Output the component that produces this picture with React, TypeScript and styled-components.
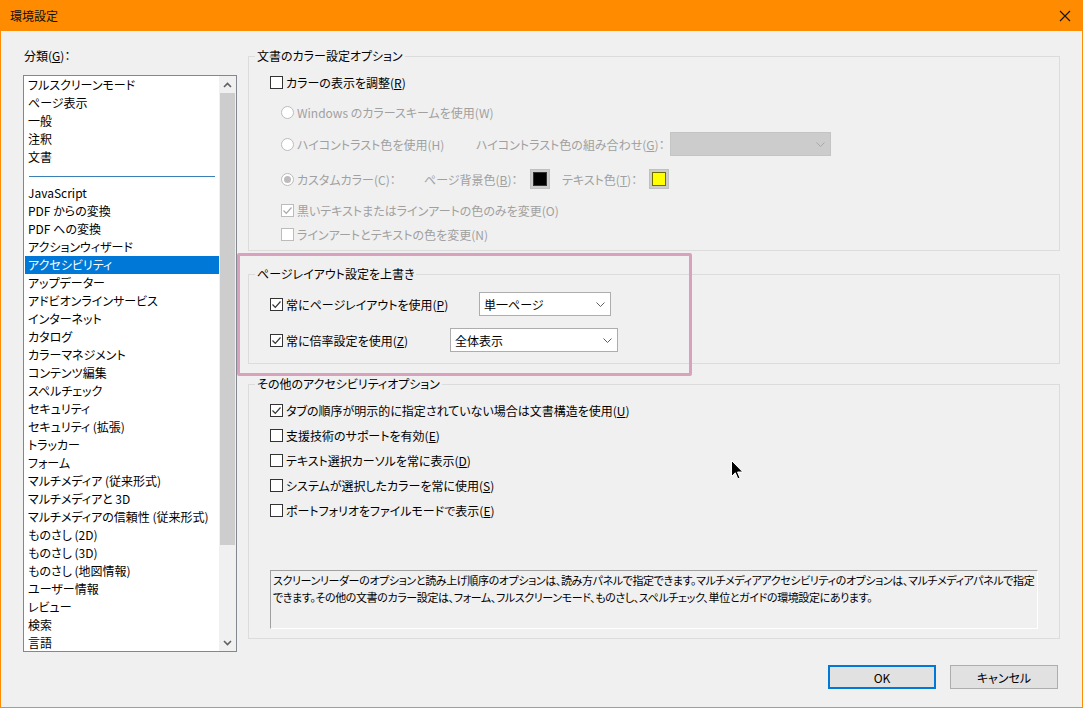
import React from "react";
import styled, { createGlobalStyle } from "styled-components";

const ORANGE = "#ff8c00";
const ACCENT = "#0078d7";
const DIM = "#a0a0a0";

const GlobalStyle = createGlobalStyle`
  html, body { margin: 0; padding: 0; background: #f0f0f0; }
  body {
    font-family: "Noto Sans CJK JP", "Noto Sans", sans-serif;
    font-size: 12px;
    color: #000;
    font-feature-settings: "palt";
  }
  * { box-sizing: border-box; }
`;

const Window = styled.div`
  position: relative;
  width: 1083px;
  height: 708px;
  background: #f0f0f0;
  border: 1px solid ${ORANGE};
  border-top: none;
  display: flex;
  flex-direction: column;
  overflow: hidden;
`;

const TitleBar = styled.div`
  height: 31px;
  flex: none;
  background: ${ORANGE};
  display: flex;
  align-items: center;
  justify-content: space-between;
  padding: 0 10px 0 9px;
  color: #111;
`;

const CloseButton = styled.div`
  width: 12px;
  height: 12px;
  margin-right: 1px;
  display: flex;
`;

const Content = styled.div`
  flex: 1;
  display: flex;
  padding: 17px 0 0 22px;
`;

const LeftColumn = styled.div`
  width: 214px;
  display: flex;
  flex-direction: column;
`;

const FieldLabel = styled.div`
  height: 16px;
  line-height: 16px;
  padding-left: 1px;
`;

const ListBox = styled.div`
  margin-top: 11px;
  height: 577px;
  border: 1px solid #828790;
  background: #fff;
  display: flex;
`;

const ItemList = styled.div`
  flex: 1;
  padding-left: 1px;
  overflow: hidden;
`;

const Item = styled.div<{ $selected?: boolean }>`
  height: 18px;
  line-height: 18px;
  padding-left: 3px;
  white-space: nowrap;
  background: ${(p) => (p.$selected ? ACCENT : "transparent")};
  color: ${(p) => (p.$selected ? "#fff" : "#000")};
`;

const Separator = styled.div`
  height: 18px;
  padding: 10px 4px 0 4px;
  &::after {
    content: "";
    display: block;
    height: 1px;
    background: #3a7fb6;
  }
`;

const ScrollBar = styled.div`
  width: 17px;
  background: #f0f0f0;
  display: flex;
  flex-direction: column;
`;

const ScrollArrow = styled.div`
  height: 17px;
  display: flex;
  align-items: center;
  justify-content: center;
`;

const ScrollTrack = styled.div`
  flex: 1;
`;

const ScrollThumb = styled.div`
  margin: 0 1px;
  height: 452px;
  background: #cdcdcd;
`;

const RightColumn = styled.div`
  width: 812px;
  margin-left: 11px;
  display: flex;
  flex-direction: column;
`;

const Group = styled.fieldset<{ $h: number; $mt?: number }>`
  margin: ${(p) => p.$mt ?? 0}px 0 0 0;
  padding: 0;
  height: ${(p) => p.$h}px;
  border: 1px solid #dcdcdc;
  min-inline-size: 0;
  display: flex;
  flex-direction: column;
`;

const Legend = styled.legend`
  margin-left: 6px;
  padding: 0 2px;
  line-height: 16px;
  height: 16px;
`;

const Row = styled.div<{ $mt: number; $h?: number; $indent?: number }>`
  display: flex;
  align-items: center;
  height: ${(p) => p.$h ?? 20}px;
  margin-top: ${(p) => p.$mt}px;
  padding-left: ${(p) => p.$indent ?? 21}px;
  white-space: nowrap;
`;

const Cell = styled.div<{ $w?: number; $dim?: boolean; $ml?: number }>`
  display: flex;
  align-items: center;
  width: ${(p) => (p.$w ? `${p.$w}px` : "auto")};
  margin-left: ${(p) => p.$ml ?? 0}px;
  flex: none;
  color: ${(p) => (p.$dim ? DIM : "#000")};
`;

const BoxMark = styled.span<{ $dim?: boolean }>`
  width: 13px;
  height: 13px;
  flex: none;
  border: 1px solid ${(p) => (p.$dim ? "#bcbcbc" : "#333")};
  background: #fff;
  margin-right: 3px;
  display: flex;
  align-items: center;
  justify-content: center;
`;

const RadioMark = styled.span`
  width: 13px;
  height: 13px;
  flex: none;
  border: 1px solid #bcbcbc;
  border-radius: 50%;
  background: #fff;
  margin-right: 3px;
  display: flex;
  align-items: center;
  justify-content: center;
`;

const RadioDot = styled.span`
  width: 7px;
  height: 7px;
  border-radius: 50%;
  background: #bcbcbc;
`;

const ComboBox = styled.div<{ $w: number; $dim?: boolean }>`
  width: ${(p) => p.$w}px;
  height: 24px;
  flex: none;
  border: 1px solid ${(p) => (p.$dim ? "#c4c4c4" : "#adadad")};
  background: ${(p) => (p.$dim ? "#cccccc" : "#fff")};
  display: flex;
  align-items: center;
  justify-content: space-between;
  padding: 0 5px 0 4px;
`;

const Swatch = styled.div<{ $color: string; $edge: string }>`
  width: 20px;
  height: 20px;
  flex: none;
  background: #cccccc;
  border: 1px solid #c0c0c0;
  display: flex;
  align-items: center;
  justify-content: center;
  &::after {
    content: "";
    width: 12px;
    height: 12px;
    background: ${(p) => p.$color};
    border: 1px solid ${(p) => p.$edge};
  }
`;

const InfoBox = styled.div`
  margin: 50px 0 0 21px;
  width: 768px;
  height: 59px;
  border-top: 1px solid #a0a0a0;
  border-left: 1px solid #a0a0a0;
  border-bottom: 1px solid #fff;
  border-right: 1px solid #fff;
  padding: 1px 0 0 2px;
  font-size: 11px;
  line-height: 17px;
  letter-spacing: -0.38px;
  white-space: nowrap;
`;

const ButtonRow = styled.div`
  display: flex;
  justify-content: flex-end;
  gap: 14px;
  margin-top: 26px;
  padding-right: 2px;
`;

const Button = styled.div<{ $default?: boolean }>`
  width: 108px;
  height: 24px;
  background: #e1e1e1;
  border: ${(p) => (p.$default ? `2px solid ${ACCENT}` : "1px solid #adadad")};
  display: flex;
  align-items: center;
  justify-content: center;
`;

const Highlight = styled.div`
  position: absolute;
  left: 236px;
  top: 253px;
  width: 455px;
  height: 123px;
  border: 3px solid #d9a2bc;
  border-radius: 2px;
  pointer-events: none;
`;

const Pointer = styled.svg`
  position: absolute;
  left: 730px;
  top: 460px;
`;

const Chevron = ({ up, color = "#606060" }: { up?: boolean; color?: string }) => (
  <svg width="9" height="6" viewBox="0 0 9 6">
    <path d={up ? "M1 5 L4.5 1.5 L8 5" : "M1 1 L4.5 4.5 L8 1"} fill="none" stroke={color} strokeWidth="1.6" />
  </svg>
);

const ThinChevron = ({ color }: { color: string }) => (
  <svg width="9" height="5" viewBox="0 0 9 5">
    <path d="M0.5 0.5 L4.5 4.5 L8.5 0.5" fill="none" stroke={color} strokeWidth="1" />
  </svg>
);

const Check = ({ color }: { color: string }) => (
  <svg width="11" height="11" viewBox="0 0 11 11">
    <path d="M1.5 5.5 L4.3 8.3 L9.5 2.5" fill="none" stroke={color} strokeWidth="1.2" />
  </svg>
);

const CheckItem = ({
  checked,
  dim,
  children,
}: {
  checked?: boolean;
  dim?: boolean;
  children: React.ReactNode;
}) => (
  <>
    <BoxMark $dim={dim}>{checked && <Check color={dim ? "#a8a8a8" : "#333"} />}</BoxMark>
    {children}
  </>
);

const RadioItem = ({ checked, children }: { checked?: boolean; children: React.ReactNode }) => (
  <>
    <RadioMark>{checked && <RadioDot />}</RadioMark>
    {children}
  </>
);

const categories: (string | null)[] = [
  "フルスクリーンモード",
  "ページ表示",
  "一般",
  "注釈",
  "文書",
  null,
  "JavaScript",
  "PDF からの変換",
  "PDF への変換",
  "アクションウィザード",
  "アクセシビリティ",
  "アップデーター",
  "アドビオンラインサービス",
  "インターネット",
  "カタログ",
  "カラーマネジメント",
  "コンテンツ編集",
  "スペルチェック",
  "セキュリティ",
  "セキュリティ (拡張)",
  "トラッカー",
  "フォーム",
  "マルチメディア (従来形式)",
  "マルチメディアと 3D",
  "マルチメディアの信頼性 (従来形式)",
  "ものさし (2D)",
  "ものさし (3D)",
  "ものさし (地図情報)",
  "ユーザー情報",
  "レビュー",
  "検索",
  "言語",
];

const App = () => {
  return (
    <Window>
      <GlobalStyle />
      <TitleBar>
        <span>環境設定</span>
        <CloseButton>
          <svg width="12" height="12" viewBox="0 0 12 12">
            <path d="M1 1 L11 11 M11 1 L1 11" stroke="#111" strokeWidth="1.1" />
          </svg>
        </CloseButton>
      </TitleBar>
      <Content>
        <LeftColumn>
          <FieldLabel>
            分類(<u>G</u>)：
          </FieldLabel>
          <ListBox>
            <ItemList>
              {categories.map((c, i) =>
                c === null ? (
                  <Separator key={i} />
                ) : (
                  <Item key={i} $selected={c === "アクセシビリティ"}>
                    {c}
                  </Item>
                )
              )}
            </ItemList>
            <ScrollBar>
              <ScrollArrow>
                <Chevron up />
              </ScrollArrow>
              <ScrollTrack>
                <ScrollThumb />
              </ScrollTrack>
              <ScrollArrow>
                <Chevron />
              </ScrollArrow>
            </ScrollBar>
          </ListBox>
        </LeftColumn>

        <RightColumn>
          <Group $h={203}>
            <Legend>文書のカラー設定オプション</Legend>
            <Row $mt={8}>
              <CheckItem>
                カラーの表示を調整(<u>R</u>)
              </CheckItem>
            </Row>
            <Row $mt={10} $indent={32}>
              <Cell $dim>
                <RadioItem>Windows のカラースキームを使用(W)</RadioItem>
              </Cell>
            </Row>
            <Row $mt={10} $h={24} $indent={32}>
              <Cell $w={195} $dim>
                <RadioItem>ハイコントラスト色を使用(H)</RadioItem>
              </Cell>
              <Cell $w={194} $dim>
                ハイコントラスト色の組み合わせ(<u>G</u>)：
              </Cell>
              <ComboBox $w={161} $dim>
                <span />
                <ThinChevron color="#a8a8a8" />
              </ComboBox>
            </Row>
            <Row $mt={13} $indent={32}>
              <Cell $w={143} $dim>
                <RadioItem checked>カスタムカラー(C)：</RadioItem>
              </Cell>
              <Cell $w={106} $dim>
                ページ背景色(<u>B</u>)：
              </Cell>
              <Swatch $color="#000" $edge="#333" />
              <Cell $w={87} $ml={12} $dim>
                テキスト色(<u>T</u>)：
              </Cell>
              <Swatch $color="#ffff00" $edge="#6b6b00" />
            </Row>
            <Row $mt={11} $indent={32}>
              <Cell $dim>
                <CheckItem checked dim>
                  黒いテキストまたはラインアートの色のみを変更(O)
                </CheckItem>
              </Cell>
            </Row>
            <Row $mt={4} $indent={32}>
              <Cell $dim>
                <CheckItem dim>ラインアートとテキストの色を変更(N)</CheckItem>
              </Cell>
            </Row>
          </Group>

          <Group $h={98} $mt={15}>
            <Legend>ページレイアウト設定を上書き</Legend>
            <Row $mt={10} $h={24}>
              <Cell $w={209}>
                <CheckItem checked>
                  常にページレイアウトを使用(<u>P</u>)
                </CheckItem>
              </Cell>
              <ComboBox $w={132}>
                <span>単一ページ</span>
                <ThinChevron color="#606060" />
              </ComboBox>
            </Row>
            <Row $mt={12} $h={24}>
              <Cell $w={180}>
                <CheckItem checked>
                  常に倍率設定を使用(<u>Z</u>)
                </CheckItem>
              </Cell>
              <ComboBox $w={168}>
                <span>全体表示</span>
                <ThinChevron color="#606060" />
              </ComboBox>
            </Row>
          </Group>

          <Group $h={263} $mt={12}>
            <Legend>その他のアクセシビリティオプション</Legend>
            <Row $mt={8}>
              <CheckItem checked>
                タブの順序が明示的に指定されていない場合は文書構造を使用(<u>U</u>)
              </CheckItem>
            </Row>
            <Row $mt={5}>
              <CheckItem>
                支援技術のサポートを有効(<u>E</u>)
              </CheckItem>
            </Row>
            <Row $mt={5}>
              <CheckItem>
                テキスト選択カーソルを常に表示(<u>D</u>)
              </CheckItem>
            </Row>
            <Row $mt={5}>
              <CheckItem>
                システムが選択したカラーを常に使用(<u>S</u>)
              </CheckItem>
            </Row>
            <Row $mt={5}>
              <CheckItem>
                ポートフォリオをファイルモードで表示(<u>E</u>)
              </CheckItem>
            </Row>
            <InfoBox>
              スクリーンリーダーのオプションと読み上げ順序のオプションは、読み方パネルで指定できます。マルチメディアアクセシビリティのオプションは、マルチメディアパネルで指定
              <br />
              できます。その他の文書のカラー設定は、フォーム、フルスクリーンモード、ものさし、スペルチェック、単位とガイドの環境設定にあります。
            </InfoBox>
          </Group>

          <ButtonRow>
            <Button $default>OK</Button>
            <Button>キャンセル</Button>
          </ButtonRow>
        </RightColumn>
      </Content>

      <Highlight />
      <Pointer width="13" height="20" viewBox="0 0 13 20">
        <path
          d="M0.5 0.5 L0.5 16.5 L4.3 12.8 L6.8 18.8 L9 17.9 L6.5 12 L11.8 12 Z"
          fill="#000"
          stroke="#fff"
          strokeWidth="1"
        />
      </Pointer>
    </Window>
  );
};

export default App;
